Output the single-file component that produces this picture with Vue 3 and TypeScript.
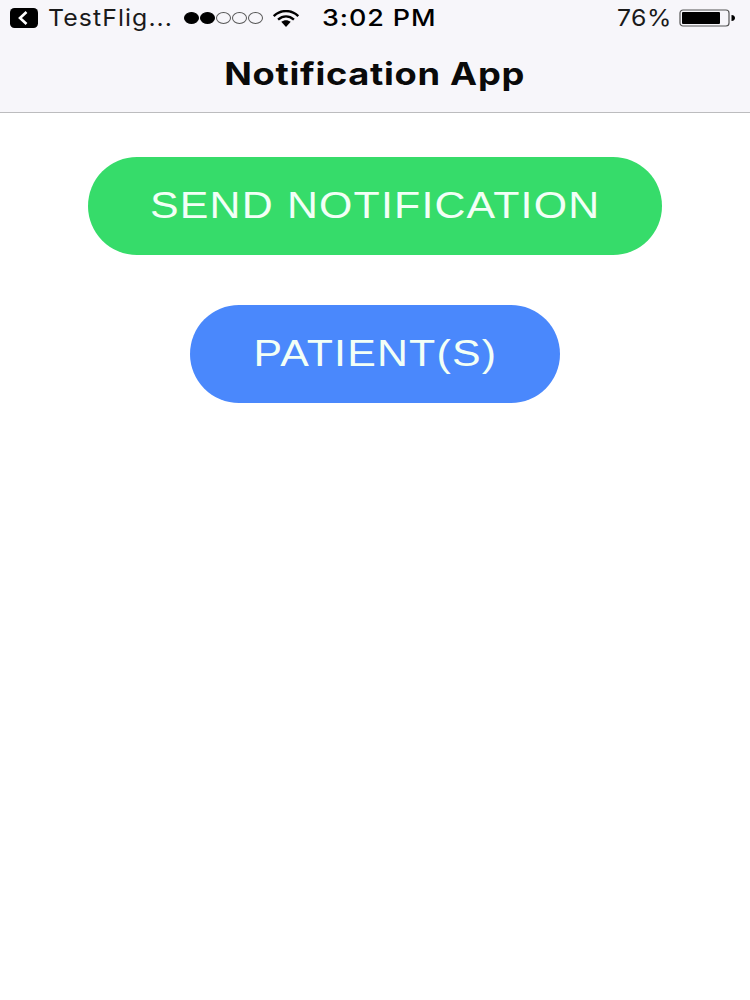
<script setup lang="ts">
const dots: boolean[] = [true, true, false, false, false]
</script>

<template>
  <div class="page">
    <header class="nav">
      <div class="status">
        <div class="left">
          <svg class="back" width="28" height="20" viewBox="0 0 28 20">
            <rect width="28" height="20" rx="4.5" fill="#000" />
            <path d="M16.5 4 L10 10 L16.5 16" fill="none" stroke="#fff" stroke-width="2.6" />
          </svg>
          <span class="app">TestFlig...</span>
          <div class="dots">
            <i v-for="(d, n) in dots" :key="n" class="dot" :class="{ on: d }"></i>
          </div>
          <svg class="wifi" width="28" height="17" viewBox="0 0 28 18">
            <path d="M1 6.4 C8.5 -0.6 19.5 -0.6 27 6.4" fill="none" stroke="#000" stroke-width="2.6" />
            <path d="M5.6 10.2 C10.8 5.8 17.2 5.8 22.4 10.2" fill="none" stroke="#000" stroke-width="2.6" />
            <path d="M9 12.4 C12 10.2 16 10.2 19 12.4 L14 18 Z" fill="#000" />
          </svg>
        </div>
        <span class="time">3:02 PM</span>
        <div class="right">
          <span class="pct">76%</span>
          <svg width="57" height="18" viewBox="0 0 57 18">
            <rect x="1" y="1" width="49" height="16" rx="3" fill="none" stroke="#555" stroke-width="1.2" />
            <rect x="3" y="3" width="38" height="12" rx="1" fill="#000" />
            <path d="M52.5 6 C55 6 56 7.5 56 9 C56 10.5 55 12 52.5 12 Z" fill="#000" />
          </svg>
        </div>
      </div>
      <div class="titlebar"><h1 class="title">Notification App</h1></div>
    </header>
    <main class="content">
      <button class="pill green"><span class="label">SEND NOTIFICATION</span></button>
      <button class="pill blue"><span class="label">PATIENT(S)</span></button>
    </main>
  </div>
</template>

<style scoped>
.page {
  width: 750px;
  height: 1000px;
  background: #fff;
  font-family: "Liberation Sans", Arial, sans-serif;
  color: #000;
  overflow: hidden;
}
.nav {
  height: 113px;
  box-sizing: border-box;
  background: #f7f6fa;
  border-bottom: 1.5px solid #bcbcbe;
}
.status {
  height: 36px;
  position: relative;
  display: flex;
  align-items: center;
  justify-content: space-between;
  padding: 0 14px 0 10px;
}
.left, .right {
  display: flex;
  align-items: center;
}
.app {
  margin-left: 10px;
  font-family: "Inter", "Liberation Sans", sans-serif;
  font-size: 23px;
  letter-spacing: 1px;
  color: #1a1a1a;
  white-space: nowrap;
  width: 126px;
  transform: scaleX(1.08);
  transform-origin: left center;
}
.dots {
  display: flex;
  gap: 1px;
  margin-left: 10px;
}
.dot {
  width: 15px;
  height: 12px;
  box-sizing: border-box;
  border: 1.2px solid #555;
  border-radius: 50%;
}
.dot.on {
  background: #000;
  border-color: #000;
}
.wifi {
  margin-left: 9px;
}
.time {
  position: absolute;
  left: 322px;
  top: 4px;
  font-family: "Inter", "Liberation Sans", sans-serif;
  font-size: 23px;
  font-weight: 500;
  letter-spacing: 0.8px;
  white-space: nowrap;
  transform: scaleX(1.17);
  transform-origin: left center;
}
.pct {
  font-family: "Inter", "Liberation Sans", sans-serif;
  font-size: 23px;
  letter-spacing: 0.4px;
  color: #1a1a1a;
  margin-right: 7px;
  transform: scaleX(1.08);
  transform-origin: right center;
}
.titlebar {
  height: 76px;
  display: flex;
  justify-content: center;
}
.title {
  margin: 0;
  line-height: 76px;
  font-family: "Inter", "Liberation Sans", sans-serif;
  font-size: 31px;
  font-weight: 700;
  letter-spacing: 0.6px;
  color: #0a0a0a;
  white-space: nowrap;
  transform: scaleX(1.17);
}
.content {
  display: flex;
  flex-direction: column;
  align-items: center;
  gap: 50px;
  padding-top: 44px;
}
.pill {
  height: 98px;
  border: 0;
  border-radius: 49px;
  padding: 0;
  color: #f2fff6;
  font-family: "Liberation Sans", Arial, sans-serif;
  font-size: 36px;
  letter-spacing: 1px;
  white-space: nowrap;
}
.label {
  display: inline-block;
  transform: scaleX(1.19);
}
.green {
  width: 574px;
  background: #36dc6a;
}
.blue {
  width: 370px;
  background: #4a88fc;
}
</style>
